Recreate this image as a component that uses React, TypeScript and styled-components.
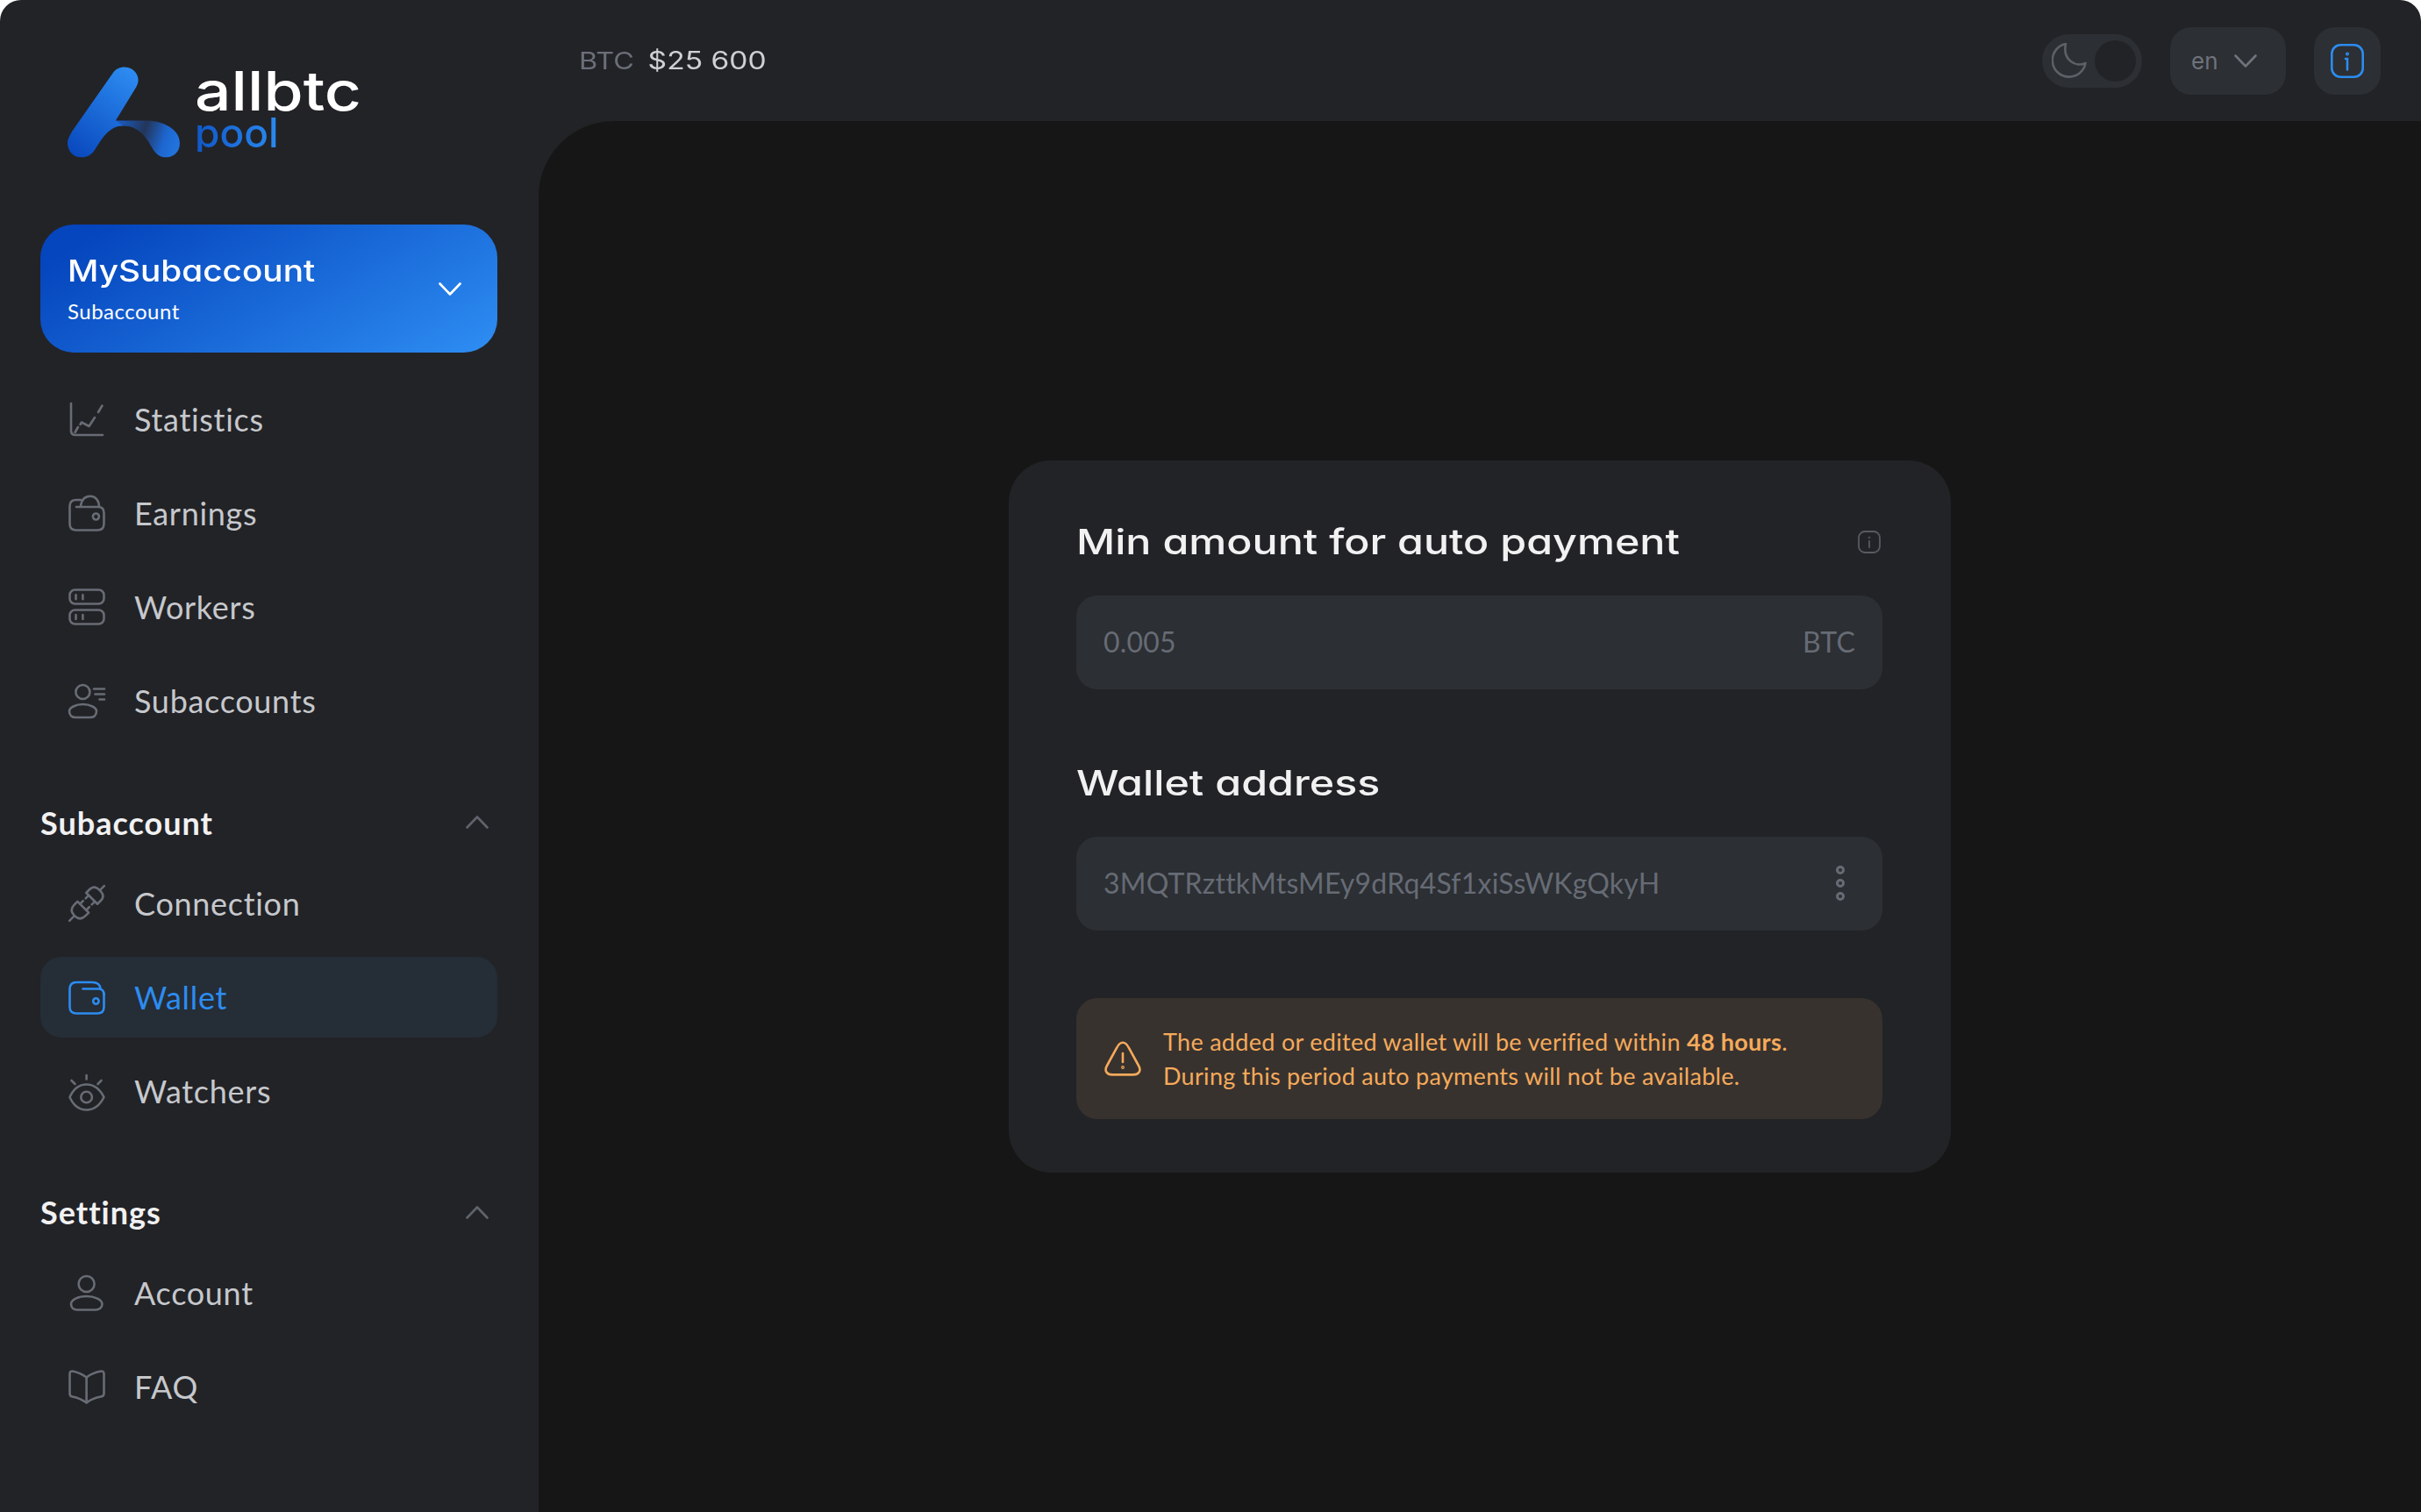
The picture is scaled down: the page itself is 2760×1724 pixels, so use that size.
import { ReactNode } from 'react';
import styled, { createGlobalStyle } from 'styled-components';

const GlobalStyle = createGlobalStyle`
  html, body {
    margin: 0;
    padding: 0;
    background: #ffffff;
  }
  * {
    box-sizing: border-box;
  }
`;

const BODY_FONT = `Lato, "Noto Sans", sans-serif`;
const WIDE_FONT = `Inter, "Liberation Sans", sans-serif`;

function StatisticsIcon() {
  return (
    <NavIcon viewBox="0 0 40 40">
      <path d="M2 2V33Q2 38 7 38H38" />
      <path d="M6.5 35L10 29" />
      <path d="M12.5 26L14 23.5L22.5 28L29 18" />
      <path d="M33 12L37.5 4.5" />
    </NavIcon>
  );
}

function EarningsIcon() {
  return (
    <NavIcon viewBox="0 0 40 40">
      <path d="M13 5H8Q0.5 5 0.5 12V32Q0.5 39.5 8 39.5H32Q39.5 39.5 39.5 32V20Q39.5 13 33 13H8" />
      <path d="M13 12C14 5 18 0.8 24 0.8C30 0.8 34 6 34 13" />
      <circle cx="30.4" cy="24" r="3.5" />
    </NavIcon>
  );
}

function WorkersIcon() {
  return (
    <NavIcon viewBox="0 0 40 40">
      <rect x="0.5" y="0.5" width="39" height="16" rx="6" />
      <rect x="0.5" y="23.5" width="39" height="16" rx="6" />
      <path d="M7.5 6.3V11.3M15.4 6.3V11.3M7.5 29V34M15.4 29V34" />
    </NavIcon>
  );
}

function SubaccountsIcon() {
  return (
    <NavIcon viewBox="0 0 40 40">
      <circle cx="15.4" cy="10" r="8" />
      <path d="M15.5 24C7 24 0 28 0 32C0 36.5 3 39 7 39H24C28 39 31 36.5 31 32C31 28 24 24 15.5 24Z" />
      <path d="M28 6.5H40M29.5 12.5H40M34.5 18.5H40" />
    </NavIcon>
  );
}

function ConnectionIcon() {
  return (
    <NavIcon viewBox="0 0 40 40">
      <g transform="rotate(45 20 20)">
        <path d="M20 -8V-1" />
        <path d="M11 12V6Q11 -1 20 -1Q29 -1 29 6V12Z" />
        <path d="M15 12V17M25 12V17" />
        <path d="M11 26H29V31Q29 40 20 40Q11 40 11 31Z" />
        <path d="M20 40V48" />
        <path d="M15 26V21M25 26V21" />
      </g>
    </NavIcon>
  );
}

function WalletIcon() {
  return (
    <NavIcon viewBox="0 0 40 40">
      <path d="M39.5 16V31Q39.5 38.5 32 38.5H8Q0.5 38.5 0.5 31V11Q0.5 3 8 3H26Q35 3 35.5 10.5" />
      <path d="M15.5 10.5H33Q39.5 10.5 39.5 17" />
      <circle cx="30.4" cy="24.5" r="3.2" />
    </NavIcon>
  );
}

function WatchersIcon() {
  return (
    <NavIcon viewBox="0 0 40 40">
      <path d="M19.6 2V6.5M2.5 8L6.5 12M36.5 8L32.5 12" />
      <path d="M0.5 27C5 17 12 12.5 19.6 12.5C27 12.5 34.5 17 39.5 27C34.5 37 27 41.5 19.6 41.5C12 41.5 5 37 0.5 27Z" />
      <circle cx="19.6" cy="27" r="6.3" />
    </NavIcon>
  );
}

function AccountIcon() {
  return (
    <NavIcon viewBox="0 0 40 40">
      <circle cx="19.6" cy="10" r="9" />
      <path d="M19.6 24C10 24 2 28 2 33C2 37 5 39.5 9 39.5H30C34 39.5 37.5 37 37.5 33C37.5 28 29 24 19.6 24Z" />
    </NavIcon>
  );
}

function BookIcon() {
  return (
    <NavIcon viewBox="0 0 40 40">
      <path d="M19.6 9.5C15 6 9 3.5 4 2.5Q0.5 2 0.5 5.5V28Q0.5 31 3.5 31.5C9 32.5 15 35 19.6 38.5C24 35 30 32.5 36 31.5Q39.5 31 39.5 28V5.5Q39.5 2 36 2.5C30 3.5 24 6 19.6 9.5Z" />
      <path d="M19.6 9.5V38" />
    </NavIcon>
  );
}

function Chevron({ up }: { up?: boolean }) {
  return (
    <ChevronSvg viewBox="0 0 26 15">
      <path d={up ? 'M1.5 13.5L13 1.5L24.5 13.5' : 'M1.5 1.5L13 13.5L24.5 1.5'} />
    </ChevronSvg>
  );
}

function LogoMark() {
  return (
    <svg width="128" height="104" viewBox="50 78 385 311">
      <defs>
        <linearGradient id="logoMain" x1="70" y1="370" x2="280" y2="90" gradientUnits="userSpaceOnUse">
          <stop offset="0" stopColor="#0a4abf" />
          <stop offset="1" stopColor="#2d8df2" />
        </linearGradient>
        <linearGradient id="logoRibbon" x1="225" y1="262" x2="425" y2="330" gradientUnits="userSpaceOnUse">
          <stop offset="0" stopColor="#1a5cc4" />
          <stop offset="0.45" stopColor="#23355a" />
          <stop offset="0.8" stopColor="#1d66cf" />
          <stop offset="1" stopColor="#2172dc" />
        </linearGradient>
      </defs>
      <path
        d="M215 262L320 262C375 262 435 290 435 340C435 370 412 388 388 388C365 388 352 375 340 355C320 320 295 280 240 280C228 280 218 272 215 262Z"
        fill="url(#logoRibbon)"
      />
      <path
        d="M205 100C222 72 270 70 288 105C296 122 292 135 285 148L215 262L240 280C195 280 170 320 145 360C135 378 118 388 98 388C65 388 50 360 50 340C50 325 58 315 65 300Z"
        fill="url(#logoMain)"
      />
    </svg>
  );
}

interface NavItemProps {
  icon: ReactNode;
  label: string;
  active?: boolean;
}

function NavItem({ icon, label, active }: NavItemProps) {
  return (
    <NavRow $active={active}>
      {icon}
      <span>{label}</span>
    </NavRow>
  );
}

function SectionTitle({ title }: { title: string }) {
  return (
    <SectionHead>
      <span>{title}</span>
      <SectionChevron>
        <Chevron up />
      </SectionChevron>
    </SectionHead>
  );
}

function App() {
  return (
    <>
      <GlobalStyle />
      <Page>
        <Sidebar>
          <Logo>
            <LogoMark />
            <LogoText>
              <LogoAll>allbtc</LogoAll>
              <LogoPool>pool</LogoPool>
            </LogoText>
          </Logo>
          <AccountCard>
            <div>
              <AccountName>MySubaccount</AccountName>
              <AccountType>Subaccount</AccountType>
            </div>
            <Chevron />
          </AccountCard>
          <NavList>
            <NavItem icon={<StatisticsIcon />} label="Statistics" />
            <NavItem icon={<EarningsIcon />} label="Earnings" />
            <NavItem icon={<WorkersIcon />} label="Workers" />
            <NavItem icon={<SubaccountsIcon />} label="Subaccounts" />
          </NavList>
          <SectionTitle title="Subaccount" />
          <NavList>
            <NavItem icon={<ConnectionIcon />} label="Connection" />
            <NavItem icon={<WalletIcon />} label="Wallet" active />
            <NavItem icon={<WatchersIcon />} label="Watchers" />
          </NavList>
          <SectionTitle title="Settings" />
          <NavList>
            <NavItem icon={<AccountIcon />} label="Account" />
            <NavItem icon={<BookIcon />} label="FAQ" />
          </NavList>
        </Sidebar>
        <Right>
          <Topbar>
            <Price>
              <PriceLabel>BTC</PriceLabel>
              <PriceValue>$25 600</PriceValue>
            </Price>
            <TopActions>
              <ThemeToggle>
                <MoonSvg viewBox="0 0 40 40">
                  <path d="M16 1A19 19 0 1 0 38.5 23C28 28 12 20 16 1Z" />
                </MoonSvg>
                <ToggleKnob />
              </ThemeToggle>
              <LangButton>
                <span>en</span>
                <Chevron />
              </LangButton>
              <InfoButton>
                <svg width="38" height="39" viewBox="0 0 38 39" fill="none" stroke="#2c8cf0" strokeWidth="2.6" strokeLinecap="round">
                  <rect x="1.3" y="1.3" width="35.4" height="36.4" rx="10" />
                  <path d="M17 17H19V29.5" />
                  <circle cx="19" cy="11.5" r="0.8" />
                </svg>
              </InfoButton>
            </TopActions>
          </Topbar>
          <Content>
            <Card>
              <TitleRow>
                <CardTitle>Min amount for auto payment</CardTitle>
                <svg width="26" height="26" viewBox="0 0 26 26" fill="none" stroke="#565b63" strokeWidth="1.8" strokeLinecap="round">
                  <rect x="1" y="1" width="24" height="24" rx="7" />
                  <path d="M13 12V19" />
                  <circle cx="13" cy="8" r="0.4" />
                </svg>
              </TitleRow>
              <Field>
                <span>0.005</span>
                <span>BTC</span>
              </Field>
              <SecondTitle>Wallet address</SecondTitle>
              <Field>
                <span>3MQTRzttkMtsMEy9dRq4Sf1xiSsWKgQkyH</span>
                <MoreDots>
                  <i />
                  <i />
                  <i />
                </MoreDots>
              </Field>
              <Notice>
                <svg width="42" height="40" viewBox="0 0 42 40" fill="none" stroke="#f5aa5b" strokeWidth="2.6" strokeLinecap="round">
                  <path d="M21 1.8C18 1.8 16 4 14 8L3 28C-0.5 34 3 38.4 9 38.4H33C39 38.4 42.5 34 39 28L28 8C26 4 24 1.8 21 1.8Z" />
                  <path d="M21 14V24" />
                  <circle cx="21" cy="30" r="0.6" />
                </svg>
                <NoticeText>
                  The added or edited wallet will be verified within <b>48 hours</b>.
                  <br />
                  During this period auto payments will not be available.
                </NoticeText>
              </Notice>
            </Card>
          </Content>
        </Right>
      </Page>
    </>
  );
}

export default App;

const Page = styled.div`
  width: 2760px;
  height: 1724px;
  display: flex;
  overflow: hidden;
  border-radius: 24px 24px 0 0;
  background: #222327;
  font-family: ${BODY_FONT};
`;

const Sidebar = styled.aside`
  width: 614px;
  flex-shrink: 0;
  padding: 76px 47px 0 46px;
  display: flex;
  flex-direction: column;
`;

const Logo = styled.div`
  height: 104px;
  margin-left: 31px;
  display: flex;
  gap: 17px;
`;

const LogoText = styled.div`
  display: flex;
  flex-direction: column;
  align-items: flex-start;
  font-family: ${WIDE_FONT};
  font-weight: 500;
`;

const LogoAll = styled.span`
  height: 53px;
  font-size: 62px;
  line-height: 56px;
  color: #ffffff;
  transform: scaleX(1.18);
  transform-origin: left center;
`;

const LogoPool = styled.span`
  font-size: 46px;
  line-height: 44px;
  background: linear-gradient(90deg, #0f57c8, #2b8bf0);
  -webkit-background-clip: text;
  background-clip: text;
  color: transparent;
`;

const AccountCard = styled.div`
  height: 146px;
  margin-top: 76px;
  margin-bottom: 30px;
  padding: 0 41px 0 31px;
  display: flex;
  align-items: center;
  justify-content: space-between;
  border-radius: 38px;
  background: linear-gradient(150deg, #0545bd 10%, #2e8ef3 100%);
  color: #ffffff;
`;

const AccountName = styled.div`
  font-family: ${WIDE_FONT};
  font-weight: 500;
  font-size: 34px;
  line-height: 40px;
  font-feature-settings: 'cv11';
  transform: scaleX(1.14);
  transform-origin: left center;
`;

const AccountType = styled.div`
  margin-top: 11px;
  font-size: 24px;
  line-height: 30px;
  letter-spacing: 0.5px;
`;

const NavList = styled.div`
  display: flex;
  flex-direction: column;
  gap: 15px;
`;

const NavRow = styled.div<{ $active?: boolean }>`
  height: 92px;
  padding-left: 33px;
  display: flex;
  align-items: center;
  gap: 34px;
  border-radius: 24px;
  font-size: 36px;
  letter-spacing: 0.7px;
  background: ${({ $active }) => ($active ? '#252d37' : 'transparent')};
  color: ${({ $active }) => ($active ? '#2c8cf0' : '#c6c8cc')};
  svg {
    color: ${({ $active }) => ($active ? '#2c8cf0' : '#676c75')};
  }
`;

const NavIcon = styled.svg`
  width: 40px;
  height: 40px;
  flex-shrink: 0;
  overflow: visible;
  fill: none;
  stroke: currentColor;
  stroke-width: 2.6;
  stroke-linecap: round;
  stroke-linejoin: round;
`;

const ChevronSvg = styled.svg`
  width: 26px;
  height: 15px;
  fill: none;
  stroke: currentColor;
  stroke-width: 2.6;
  stroke-linecap: round;
  stroke-linejoin: round;
`;

const SectionHead = styled.div`
  height: 44px;
  margin-top: 70.5px;
  margin-bottom: 24px;
  padding-right: 10px;
  display: flex;
  align-items: center;
  justify-content: space-between;
  font-size: 36px;
  font-weight: 700;
  letter-spacing: 1px;
  color: #f1f1f2;
`;

const SectionChevron = styled.span`
  display: flex;
  color: #5f636b;
`;

const Right = styled.div`
  flex: 1;
  display: flex;
  flex-direction: column;
`;

const Topbar = styled.header`
  height: 138px;
  padding: 0 46px 0 46px;
  display: flex;
  align-items: center;
  justify-content: space-between;
`;

const Price = styled.div`
  display: flex;
  align-items: center;
  gap: 13px;
  font-family: ${WIDE_FONT};
  font-size: 27px;
  transform: scaleX(1.2);
  transform-origin: left center;
`;

const PriceLabel = styled.span`
  color: #6a6f79;
`;

const PriceValue = styled.span`
  font-size: 28px;
  color: #cfd0d3;
`;

const TopActions = styled.div`
  display: flex;
  align-items: center;
  gap: 32px;
`;

const ThemeToggle = styled.div`
  width: 114px;
  height: 61px;
  padding: 0 7px 0 11px;
  display: flex;
  align-items: center;
  justify-content: space-between;
  border-radius: 31px;
  background: #2c2f33;
`;

const MoonSvg = styled.svg`
  width: 40px;
  height: 40px;
  fill: none;
  stroke: #5d6067;
  stroke-width: 2.6;
  stroke-linejoin: round;
`;

const ToggleKnob = styled.span`
  width: 47px;
  height: 47px;
  border-radius: 50%;
  background: #222327;
`;

const LangButton = styled.div`
  width: 132px;
  height: 77px;
  padding: 0 33px 0 24px;
  display: flex;
  align-items: center;
  justify-content: space-between;
  border-radius: 24px;
  background: #2c2f33;
  font-family: ${WIDE_FONT};
  font-size: 26px;
  color: #6f737c;
`;

const InfoButton = styled.div`
  width: 76px;
  height: 77px;
  display: flex;
  align-items: center;
  justify-content: center;
  border-radius: 24px;
  background: #2c2f33;
`;

const Content = styled.main`
  flex: 1;
  display: flex;
  align-items: center;
  justify-content: center;
  border-top-left-radius: 86px;
  background: #161616;
`;

const Card = styled.section`
  width: 1074px;
  height: 812px;
  padding: 70px 78px 0 77px;
  border-radius: 48px;
  background: #222327;
`;

const TitleRow = styled.div`
  height: 46px;
  margin-bottom: 38px;
  padding-right: 2px;
  display: flex;
  align-items: center;
  justify-content: space-between;
`;

const CardTitle = styled.h2`
  margin: 0;
  font-family: ${WIDE_FONT};
  font-weight: 500;
  font-size: 40px;
  line-height: 46px;
  color: #f1f1f2;
  font-feature-settings: 'cv11';
  transform: scaleX(1.21);
  transform-origin: left center;
  white-space: nowrap;
`;

const SecondTitle = styled(CardTitle)`
  margin-top: 84px;
  margin-bottom: 38px;
`;

const Field = styled.div`
  height: 107px;
  padding: 0 31px 2px;
  display: flex;
  align-items: center;
  justify-content: space-between;
  border-radius: 24px;
  background: #2c2f33;
  font-size: 32px;
  letter-spacing: 0.2px;
  color: #666b75;
`;

const MoreDots = styled.span`
  margin-right: 12px;
  display: flex;
  flex-direction: column;
  gap: 5px;
  i {
    width: 10px;
    height: 10px;
    border: 3px solid #666b75;
    border-radius: 50%;
  }
`;

const Notice = styled.div`
  height: 138px;
  margin-top: 77px;
  padding: 0 32px;
  display: flex;
  align-items: center;
  gap: 25px;
  border-radius: 24px;
  background: #38322e;
`;

const NoticeText = styled.p`
  margin: 0;
  font-size: 27px;
  line-height: 39px;
  letter-spacing: 0.3px;
  color: #f5aa5b;
  b {
    font-weight: 700;
  }
`;
